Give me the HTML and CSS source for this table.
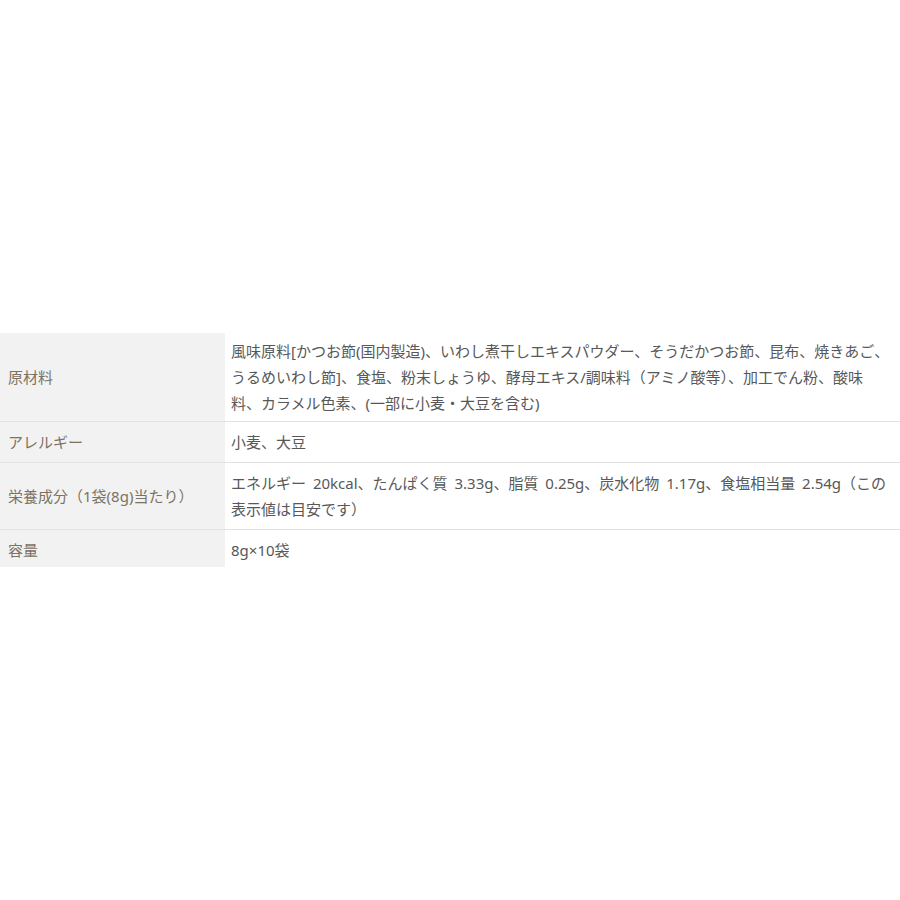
FILE: index.html
```html
<!DOCTYPE html>
<html lang="ja">
<head>
    <meta charset="UTF-8">
    <meta name="viewport" content="width=device-width, initial-scale=1.0">
    <title>商品情報</title>
    <link rel="stylesheet" href="styles.css">
</head>
<body>
    <div class="spec">
        <table class="spec-table">
            <tr class="first">
                <th>原材料</th>
                <td>風味原料[かつお節(国内製造)、いわし煮干しエキスパウダー、そうだかつお節、昆布、焼きあご、うるめいわし節]、食塩、粉末しょうゆ、酵母エキス/調味料（アミノ酸等）、加工でん粉、酸味料、カラメル色素、(一部に小麦・大豆を含む)</td>
            </tr>
            <tr>
                <th>アレルギー</th>
                <td>小麦、大豆</td>
            </tr>
            <tr>
                <th>栄養成分（1袋(8g)当たり）</th>
                <td>エネルギー 20kcal、たんぱく質 3.33g、脂質 0.25g、炭水化物 1.17g、食塩相当量 2.54g（この表示値は目安です）</td>
            </tr>
            <tr class="last">
                <th>容量</th>
                <td>8g×10袋</td>
            </tr>
        </table>
    </div>
</body>
</html>
```

FILE: styles.css
```css
body {
    margin: 0;
    padding: 0;
    background: #fff;
    font-family: "Noto Sans", "Noto Sans CJK JP", sans-serif;
}
.spec {
    padding-top: 333px;
}
.spec-table {
    width: 900px;
    border-collapse: collapse;
    font-size: 15px;
    line-height: 26px;
}
.spec-table th {
    width: 209px;
    padding: 7px 8px;
    background: #f2f2f2;
    color: #7d7262;
    font-weight: normal;
    text-align: left;
    vertical-align: middle;
    border-bottom: 1px solid #e2e2e2;
}
.spec-table td {
    padding: 7px 10px 7px 6px;
    color: #585858;
    text-align: left;
    vertical-align: middle;
    word-spacing: 3px;
    border-bottom: 1px solid #e2e2e2;
}
.spec-table .first th,
.spec-table .first td {
    padding-top: 5px;
    padding-bottom: 5px;
}
.spec-table .last th,
.spec-table .last td {
    border-bottom: none;
    padding-bottom: 4px;
}
```
